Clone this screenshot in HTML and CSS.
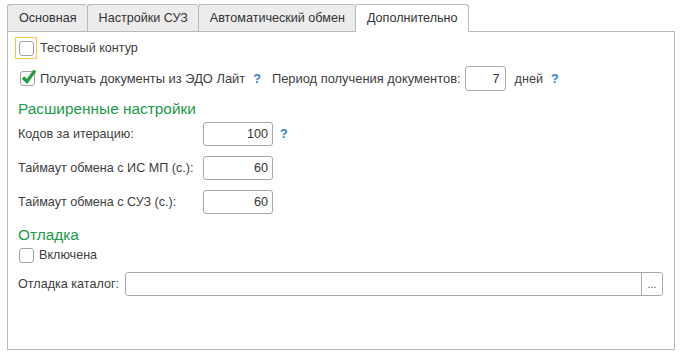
FILE: index.html
```html
<!DOCTYPE html>
<html lang="ru">
<head>
    <meta charset="UTF-8">
    <title>Настройки</title>
    <link rel="stylesheet" href="styles.css">
</head>
<body>
    <div class="tabs">
        <div class="tab">Основная</div>
        <div class="tab">Настройки СУЗ</div>
        <div class="tab">Автоматический обмен</div>
        <div class="tab active">Дополнительно</div>
    </div>

    <div class="panel">
        <div class="row row-test">
            <span class="focus"><span class="check"></span></span>
            <span class="label">Тестовый контур</span>
        </div>

        <div class="row row-edo">
            <span class="check checked">
                <svg width="18" height="18" viewBox="0 0 18 18">
                    <path d="M3 9.5 L7 13.5 L15 2.5" fill="none" stroke="#1f9d3f" stroke-width="3.2"/>
                </svg>
            </span>
            <span class="label wide">Получать документы из ЭДО Лайт</span>
            <span class="help">?</span>
            <span class="label period wide">Период получения документов:</span>
            <input class="field small" type="text" value="7" readonly>
            <span class="label days">дней</span>
            <span class="help">?</span>
        </div>

        <div class="heading first">Расширенные настройки</div>

        <div class="row row-field">
            <span class="label name">Кодов за итерацию:</span>
            <input class="field num" type="text" value="100" readonly>
            <span class="help">?</span>
        </div>
        <div class="row row-field">
            <span class="label name">Таймаут обмена с ИС МП (с.):</span>
            <input class="field num" type="text" value="60" readonly>
        </div>
        <div class="row row-field">
            <span class="label name">Таймаут обмена с СУЗ (с.):</span>
            <input class="field num" type="text" value="60" readonly>
        </div>

        <div class="heading second">Отладка</div>

        <div class="row row-debug">
            <span class="check"></span>
            <span class="label">Включена</span>
        </div>

        <div class="row row-catalog">
            <span class="label">Отладка каталог:</span>
            <div class="path">
                <input class="path-input" type="text" value="" readonly>
                <button class="path-btn">...</button>
            </div>
        </div>
    </div>
</body>
</html>
```

FILE: styles.css
```css
* {
    margin: 0;
    padding: 0;
    box-sizing: border-box;
    font-family: "Liberation Sans", Arial, sans-serif;
}

body {
    background: #ffffff;
    color: #404040;
    font-size: 12.6px;
    width: 683px;
    height: 356px;
    overflow: hidden;
}

.tabs {
    display: flex;
    padding: 4px 0 0 7px;
    height: 32px;
}

.tab {
    height: 28px;
    line-height: 26px;
    padding: 0 10px 0 11px;
    background: #ececec;
    border: 1px solid #b9b9b9;
    border-right: none;
    border-radius: 3px 3px 0 0;
    color: #333333;
    font-size: 12.6px;
}

.tab.active {
    background: #ffffff;
    border-right: 1px solid #b9b9b9;
    border-bottom: none;
    position: relative;
    z-index: 1;
    padding: 0 10px 0 11px;
}

.panel {
    margin: -1px 0 0 7px;
    width: 668px;
    height: 319px;
    border: 1px solid #b9b9b9;
    padding: 0 10px 0 10px;
    display: flex;
    flex-direction: column;
}

.row {
    display: flex;
    align-items: center;
}

.label {
    white-space: nowrap;
}

.label.wide {
    font-size: 12.9px;
}

.check {
    display: inline-block;
    position: relative;
    width: 15px;
    height: 15px;
    border: 1px solid #a2a2a2;
    border-radius: 3px;
    background: #ffffff;
}

.check svg {
    position: absolute;
    left: -1px;
    top: -4px;
}

.focus {
    display: flex;
    align-items: center;
    justify-content: center;
    width: 22px;
    height: 22px;
    border: 1px solid #f1c84b;
    margin-left: -3px;
}

.row-test {
    margin-top: 5px;
    height: 22px;
}

.row-test .label {
    margin-left: 3px;
}

.row-edo {
    margin-top: 7px;
    height: 25px;
}

.row-edo .check {
    margin-left: 2px;
}

.row-edo .check + .label,
.row-debug .check + .label {
    margin-left: 5px;
}

.help {
    color: #2f7fc4;
    font-weight: bold;
    margin-left: 7px;
}

.row-edo .help {
    margin-left: 8px;
}

.period {
    margin-left: 11px;
}

.days {
    margin-left: 9px;
}

.field {
    height: 25px;
    border: 1px solid #a8a8a8;
    border-radius: 3px;
    background: #ffffff;
    text-align: right;
    font-size: 12.6px;
    color: #333333;
    padding-right: 4px;
    outline: none;
}

.field.small {
    width: 41px;
    margin-left: 4px;
    padding-right: 5px;
}

.heading {
    color: #1b9b47;
    font-size: 15.4px;
    line-height: 20px;
    height: 20px;
}

.heading.first {
    margin-top: 8px;
}

.heading.second {
    margin-top: 11px;
}

.row-field {
    height: 24px;
    margin-top: 10px;
}

.heading.first + .row-field {
    margin-top: 3px;
}

.row-field .name {
    width: 185px;
}

.field.num {
    width: 70px;
    height: 24px;
}

.row-field .help {
    margin-left: 7px;
}

.row-debug {
    height: 20px;
    margin-top: 0;
}

.row-debug .check {
    margin-left: 1px;
}

.row-catalog {
    margin-top: 7px;
    height: 24px;
}

.path {
    display: flex;
    margin-left: 6px;
    width: 538px;
    height: 24px;
    border: 1px solid #a8a8a8;
    border-radius: 3px;
    overflow: hidden;
}

.path-input {
    flex: 1;
    border: none;
    outline: none;
    font-size: 12.6px;
}

.path-btn {
    width: 21px;
    border: none;
    border-left: 1px solid #a8a8a8;
    background: #ffffff;
    color: #555555;
    font-size: 11px;
    line-height: 18px;
}
```
